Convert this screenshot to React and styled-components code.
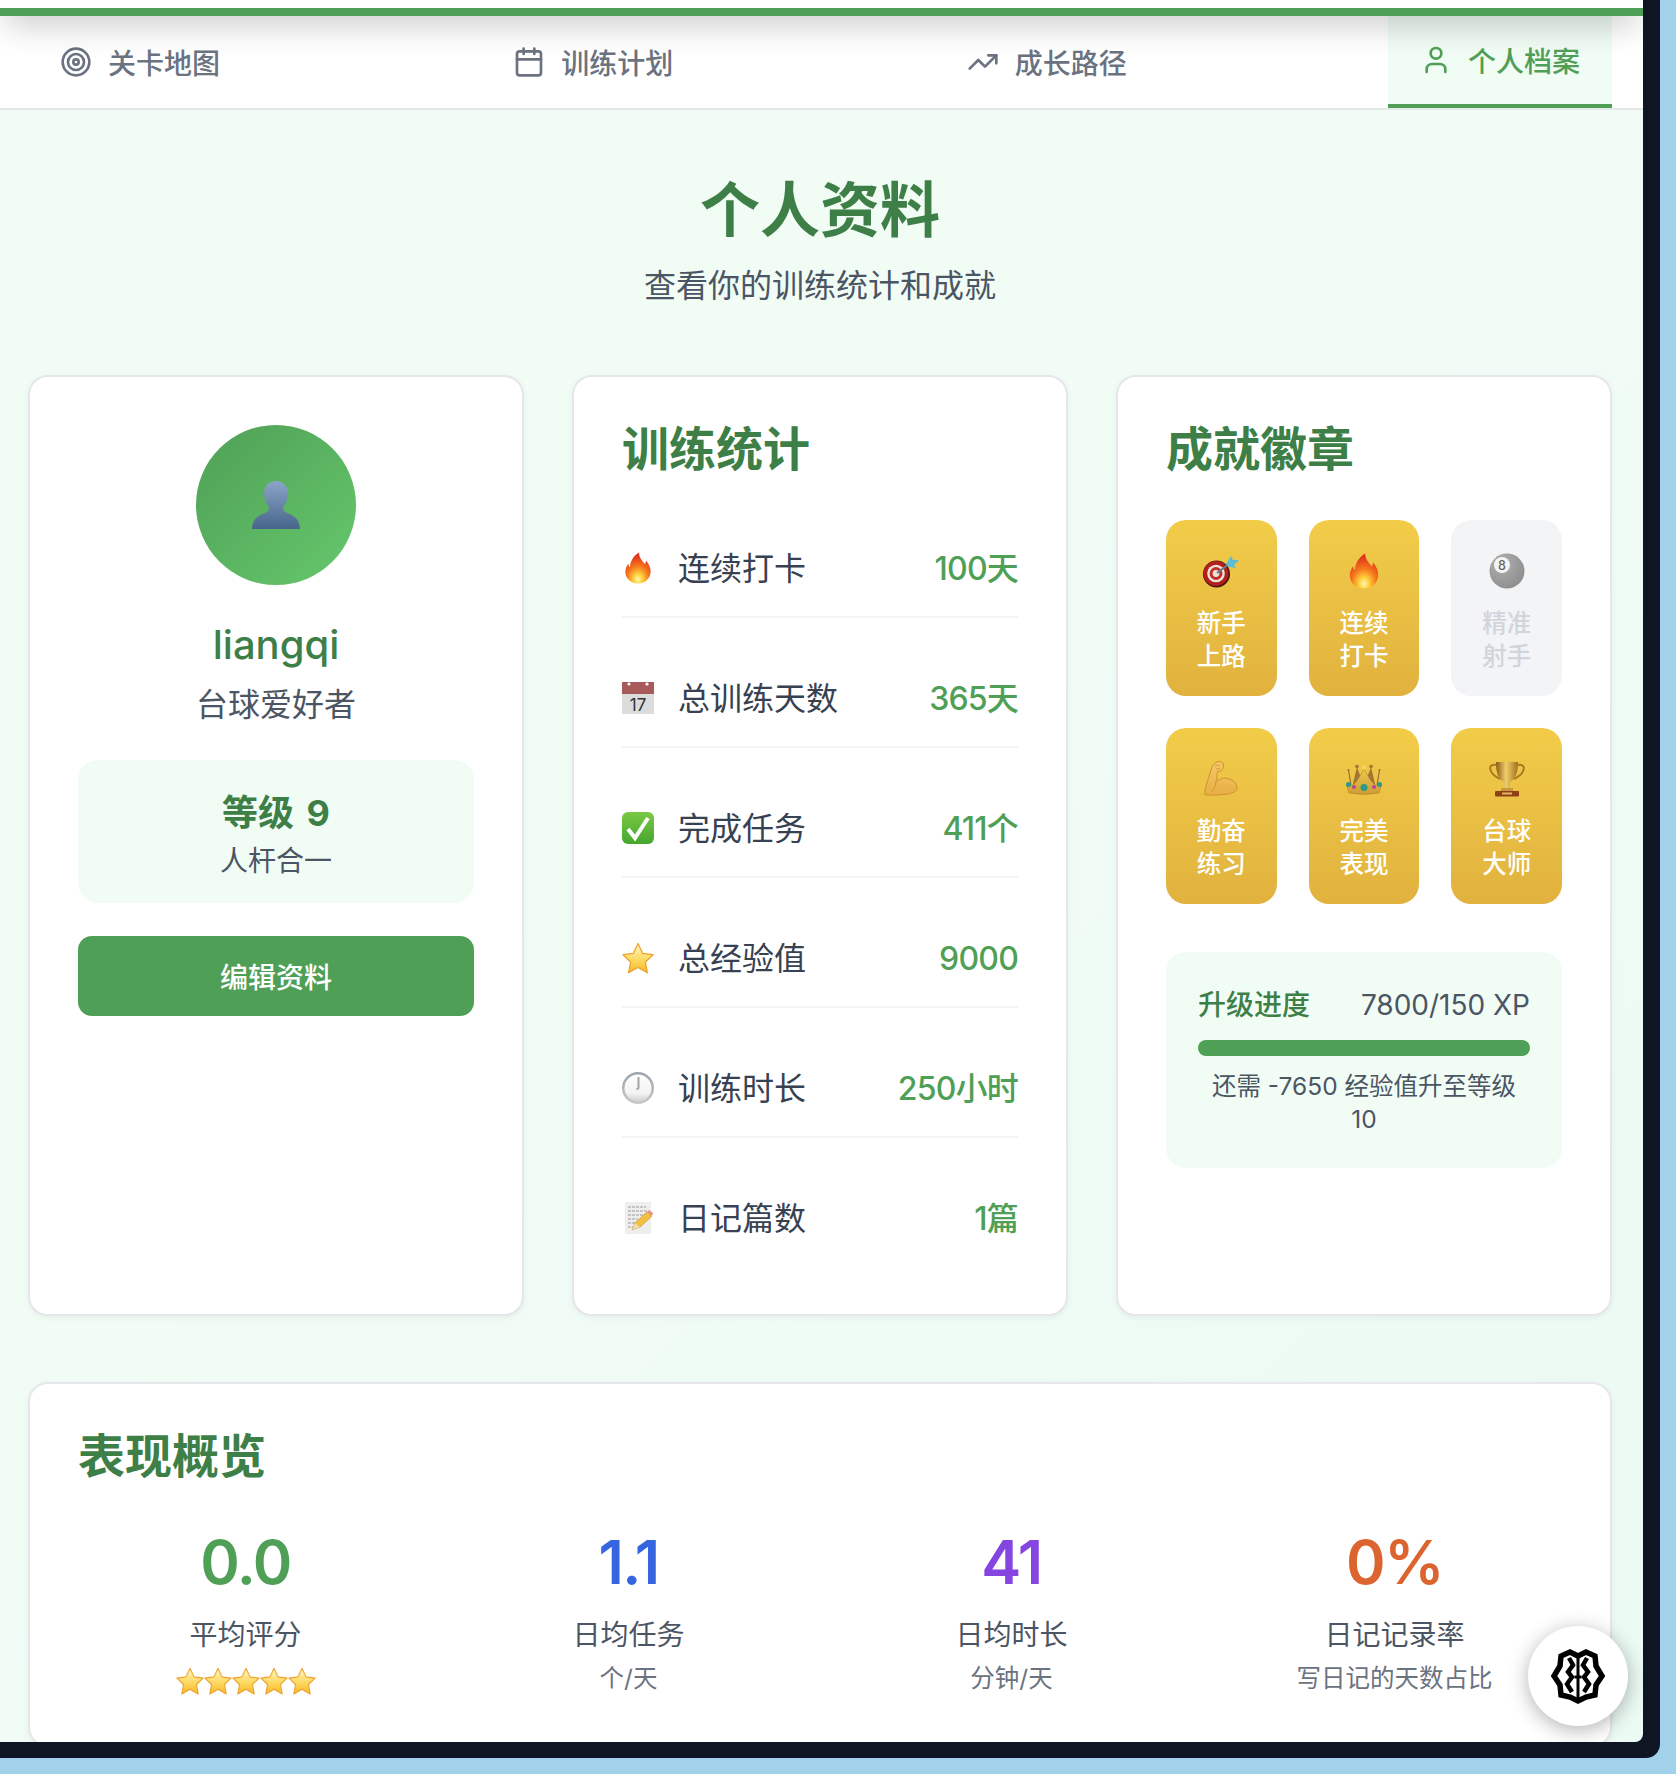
import styled, { createGlobalStyle } from 'styled-components';
import { Target, Calendar, TrendingUp, User } from 'lucide-react';

const GREEN = '#4f9f56';
const DARK_GREEN = '#3d7f47';
const MINT = '#f1fcf5';

const GlobalStyle = createGlobalStyle`
  html, body {
    margin: 0;
    height: 1774px;
    overflow: hidden;
    background: #a2d1ec;
    font-family: Inter, "Noto Sans CJK SC", sans-serif;
  }
  * { box-sizing: border-box; }
`;

// > Frame
const Screen = styled.div`
  width: 1660px;
  height: 1758px;
  padding: 0 17px 16px 0;
  background: #0f1523;
  border-radius: 0 0 14px 0;
`;
const Page = styled.div`
  position: relative;
  height: 100%;
  overflow: hidden;
  background: linear-gradient(135deg, ${MINT} 40%, #ecfaf4 100%);
  border-radius: 0 0 8px 0;
`;
const TopStrip = styled.div`
  height: 8px;
  background: #fff;
`;
const AccentBar = styled.div`
  position: relative;
  z-index: 2;
  height: 8px;
  background: ${GREEN};

  /* the bar is too thin to carry a shadow with negative spread itself */
  &::after {
    content: '';
    position: absolute;
    left: 0;
    right: 0;
    bottom: 0;
    height: 48px;
    box-shadow: 0 16px 32px -6px rgba(0, 0, 0, 0.2);
    pointer-events: none;
  }
`;

// > Nav
const Nav = styled.nav`
  display: flex;
  justify-content: space-between;
  height: 94px;
  padding: 0 31px 0 28px;
  background: #fff;
  border-bottom: 2px solid #e5e7eb;
`;
const Tab = styled.div`
  display: flex;
  align-items: center;
  gap: 16px;
  width: 224px;
  padding: 0 32px;
  font-size: 28px;
  font-weight: 500;
  color: ${props => (props.$active ? GREEN : '#6b7280')};
  background: ${props => (props.$active ? MINT : 'transparent')};
  border-bottom: ${props => (props.$active ? `4px solid ${GREEN}` : 'none')};
  white-space: nowrap;
`;

// > Content
const Main = styled.main`
  padding: 56px 31px 0 28px;
`;
const PageHead = styled.header`
  margin-bottom: 66px;
  text-align: center;
`;
const PageTitle = styled.h1`
  margin: 0;
  font-size: 60px;
  line-height: 88px;
  font-weight: 700;
  color: ${DARK_GREEN};
`;
const PageSub = styled.p`
  margin: 8px 0 0;
  font-size: 32px;
  line-height: 47px;
  color: #4b5563;
`;
const CardGrid = styled.div`
  display: grid;
  grid-template-columns: repeat(3, 1fr);
  gap: 48px;
  margin-bottom: 66px;
`;
const Card = styled.section`
  padding: 48px;
  background: #fff;
  border: 2px solid #e5e7eb;
  border-radius: 20px;
  box-shadow: 0 2px 6px rgba(0, 0, 0, 0.05);
`;
const CardTitle = styled.h2`
  margin: 0 0 47px;
  font-size: 47px;
  line-height: 48px;
  font-weight: 700;
  color: ${DARK_GREEN};
`;

// > Profile
const Profile = styled(Card)`
  display: flex;
  flex-direction: column;
  align-items: center;
`;
const Avatar = styled.div`
  display: flex;
  align-items: center;
  justify-content: center;
  width: 160px;
  height: 160px;
  border-radius: 50%;
  background: linear-gradient(135deg, ${GREEN}, #66c86c);
`;
const UserName = styled.div`
  margin-top: 28px;
  font-size: 40px;
  line-height: 63px;
  font-weight: 500;
  color: ${DARK_GREEN};
`;
const UserRole = styled.div`
  margin-top: 5px;
  font-size: 32px;
  line-height: 47px;
  color: #4b5563;
`;
const LevelBox = styled.div`
  width: 100%;
  margin-top: 32px;
  padding: 29px 0 22px;
  text-align: center;
  background: ${MINT};
  border-radius: 20px;
`;
const LevelName = styled.div`
  font-size: 36px;
  line-height: 48px;
  font-weight: 700;
  word-spacing: 4px;
  color: ${DARK_GREEN};
`;
const LevelTitle = styled.div`
  margin-top: 4px;
  font-size: 28px;
  line-height: 40px;
  color: #4b5563;
`;
const EditButton = styled.button`
  width: 100%;
  height: 80px;
  margin-top: 33px;
  border: none;
  border-radius: 14px;
  background: ${GREEN};
  color: #fff;
  font: 500 28px Inter, "Noto Sans CJK SC", sans-serif;
`;

// > Stats
const StatRow = styled.div`
  display: flex;
  align-items: center;
  padding: 24.5px 0;
  margin-bottom: 32px;
  border-bottom: 2px solid #f3f4f6;
  font-size: 32px;
  line-height: 47px;

  &:last-child {
    margin-bottom: 0;
    border-bottom: none;
  }
`;
const StatLabel = styled.span`
  flex: 1;
  margin-left: 24px;
  color: #374151;
`;
const StatValue = styled.span`
  font-weight: 500;
  letter-spacing: -0.8px;
  color: ${GREEN};
`;

// > Badges
const BadgeGrid = styled.div`
  display: grid;
  grid-template-columns: repeat(3, 1fr);
  gap: 32px;
`;
const Badge = styled.div`
  display: flex;
  flex-direction: column;
  align-items: center;
  height: 176px;
  padding: 33px 21px 0;
  border-radius: 20px;
  text-align: center;
  font-size: 24.5px;
  line-height: 32.5px;
  font-weight: 500;
  color: ${props => (props.$locked ? '#d1d5db' : '#fff')};
  background: ${props => (props.$locked ? '#f3f4f6' : 'linear-gradient(180deg, #f2cc49, #e1b23e)')};
`;
const BadgeName = styled.div`
  margin-top: 18px;
`;
const ProgressBox = styled.div`
  margin-top: 48px;
  padding: 32px;
  background: ${MINT};
  border-radius: 20px;
`;
const ProgressHead = styled.div`
  display: flex;
  justify-content: space-between;
  font-size: 28px;
  line-height: 42px;
  color: #4b5563;
`;
const ProgressLabel = styled.span`
  font-weight: 500;
  color: ${DARK_GREEN};
`;
const ProgressBar = styled.div`
  height: 16px;
  margin: 14px 0;
  border-radius: 8px;
  background: ${GREEN};
`;
const ProgressNote = styled.div`
  font-size: 24.5px;
  line-height: 33px;
  text-align: center;
  color: #4b5563;
`;

// > Overview
const OverviewGrid = styled.div`
  display: grid;
  grid-template-columns: repeat(4, 1fr);
  gap: 48px;
  text-align: center;
`;
const OverviewValue = styled.div`
  font-size: 60px;
  line-height: 71px;
  font-weight: 600;
  letter-spacing: -1.5px;
  color: ${props => props.$color};
`;
const OverviewLabel = styled.div`
  margin-top: 16px;
  font-size: 28px;
  line-height: 42px;
  color: #4b5563;
`;
const OverviewNote = styled.div`
  margin-top: 4px;
  font-size: 24.5px;
  line-height: 37px;
  color: #6b7280;
`;
const Stars = styled.div`
  display: flex;
  justify-content: center;
  margin-top: 11px;
`;
const HelperButton = styled.div`
  position: absolute;
  left: 1528px;
  top: 1626px;
  display: flex;
  align-items: center;
  justify-content: center;
  width: 100px;
  height: 100px;
  border-radius: 50%;
  background: #fff;
  box-shadow: 0 4px 20px rgba(0, 0, 0, 0.3);
`;

// > Emoji drawings
const Fire = ({ size = 32 }) => (
  <svg width={size} height={size} viewBox="0 0 32 32">
    <defs>
      <radialGradient id="flameFill" cx="0.5" cy="0.86" r="0.78">
        <stop offset="0" stopColor="#fff7b5" />
        <stop offset=".22" stopColor="#ffd23c" />
        <stop offset=".55" stopColor="#f5781c" />
        <stop offset="1" stopColor="#df2f1d" />
      </radialGradient>
    </defs>
    <path d="M17 .5c0 5 3 8 6 11.500.6-1 .9-2.200 1-3.500 3 3.500 5 7.500 4.600 12C28 27 22.500 31.500 16 31.500S4 27 3.400 21c-.4-4 1.100-7 3.100-9.500-.1 1.500.3 3 1.500 3.500C8 10 11 4 17 .5z" fill="url(#flameFill)" />
  </svg>
);
const CalendarDay = ({ size = 32 }) => (
  <svg width={size} height={size} viewBox="0 0 32 32">
    <rect width="32" height="32" fill="#dcdcdc" />
    <rect width="32" height="12" fill="#a8595a" />
    <circle cx="7" cy="2" r="1.600" fill="#fff" />
    <circle cx="25" cy="2" r="1.600" fill="#fff" />
    <text x="16" y="29" fontSize="17" textAnchor="middle" fill="#333" fontFamily="Inter, sans-serif">17</text>
  </svg>
);
const CheckBox = ({ size = 32 }) => (
  <svg width={size} height={size} viewBox="0 0 32 32">
    <defs>
      <linearGradient id="checkFill" x1="0" y1="0" x2="0" y2="1">
        <stop offset="0" stopColor="#7ac943" />
        <stop offset="1" stopColor="#46a62f" />
      </linearGradient>
    </defs>
    <rect width="32" height="32" rx="6" fill="url(#checkFill)" />
    <path d="M6 17l7 9L26 6" fill="none" stroke="#fff" strokeWidth="4" />
  </svg>
);
const StarIcon = ({ size = 32 }) => (
  <svg width={size} height={size} viewBox="0 0 32 32">
    <defs>
      <linearGradient id="starFill" x1="0" y1="0" x2="0" y2="1">
        <stop offset="0" stopColor="#fff6c4" />
        <stop offset=".6" stopColor="#fdd65a" />
        <stop offset="1" stopColor="#f8b62c" />
      </linearGradient>
    </defs>
    <path d="M16 1.500l4.600 9.800 10.400 1.400-7.600 7.300 2 10.800L16 25.400 6.600 30.800l2-10.800L1 12.700l10.400-1.400z" fill="url(#starFill)" stroke="#eba028" strokeWidth="1.200" strokeLinejoin="round" />
  </svg>
);
const Clock = ({ size = 32 }) => (
  <svg width={size} height={size} viewBox="0 0 32 32">
    <defs>
      <linearGradient id="clockFill" x1="0" y1="0" x2="0" y2="1">
        <stop offset="0" stopColor="#9aa2ad" />
        <stop offset="1" stopColor="#c8c8c8" />
      </linearGradient>
      <linearGradient id="clockFace" x1="0" y1="0" x2="0" y2="1">
        <stop offset="0" stopColor="#fff" />
        <stop offset=".7" stopColor="#f2f2f2" />
        <stop offset="1" stopColor="#d0d0d0" />
      </linearGradient>
    </defs>
    <circle cx="16" cy="16" r="16" fill="url(#clockFill)" />
    <circle cx="16" cy="16" r="13.500" fill="url(#clockFace)" />
    <path d="M16.500 5v11l-2 1.500" fill="none" stroke="#a5a5a5" strokeWidth="2" />
  </svg>
);
const Memo = ({ size = 32 }) => (
  <svg width={size} height={size} viewBox="0 0 32 32">
    <rect x="3" width="26" height="32" fill="#eeeeee" />
    <path d="M6 5h18M6 9h20M6 13h18M6 17h10M6 21h8M6 25h6" stroke="#9a9a9a" strokeWidth="1" strokeDasharray="3 1" />
    <path d="M10 28l3-7L25 10l5 4-12 11z" fill="#f3c13f" stroke="#b98a24" strokeWidth=".6" />
    <path d="M25 10l2-2 4 3-1 3z" fill="#ea8d8d" />
    <path d="M10 28l3-7 5 4z" fill="#f5dcae" />
  </svg>
);
const Dart = ({ size = 36 }) => (
  <svg width={size} height={size} viewBox="0 0 36 36">
    <circle cx="13.500" cy="21" r="13.500" fill="#4a1410" />
    <circle cx="13" cy="20.500" r="12.500" fill="#b3211c" />
    <circle cx="13" cy="20.500" r="8.800" fill="#efe3dc" />
    <circle cx="13" cy="20.500" r="6.400" fill="#c0302a" />
    <circle cx="13" cy="20.500" r="3.400" fill="#efe3dc" />
    <path d="M14 20L26 11" stroke="#5f7c88" strokeWidth="2" />
    <path d="M23 11l5-8 2 4 6 0-5 5 2 3-7-1z" fill="#5dbdd6" />
  </svg>
);
const EightBall = ({ size = 36 }) => (
  <svg width={size} height={size} viewBox="0 0 36 36">
    <defs>
      <radialGradient id="ballFill" cx="0.35" cy="0.3" r="0.8">
        <stop offset="0" stopColor="#b0b0b0" />
        <stop offset="1" stopColor="#8b8b8b" />
      </radialGradient>
    </defs>
    <circle cx="18" cy="18" r="17.500" fill="url(#ballFill)" />
    <circle cx="13" cy="12" r="8" fill="#f4f4f4" />
    <text x="13" y="16.500" fontSize="12.500" textAnchor="middle" fill="#666" fontFamily="Inter, sans-serif">8</text>
  </svg>
);
const Muscle = ({ size = 36 }) => (
  <svg width={size} height={size} viewBox="0 0 36 36">
    <defs>
      <linearGradient id="armFill" x1="0" y1="0" x2="0" y2="1">
        <stop offset="0" stopColor="#f5c965" />
        <stop offset="1" stopColor="#e8ae43" />
      </linearGradient>
    </defs>
    <path d="M8 9c1-4 3-7 6-8 3-1 6 0 6.500 3 .4 3-1.500 6-4 6l-2 .5c-.5 2.500-1 5.500-.5 10 3-3 7-4 11-3 5 1 9 5 9 9.500 0 3-4 5-9 6-7 1-17 1.500-23 .8C1 28 5 20 8 9z" fill="url(#armFill)" stroke="#c98c30" strokeWidth=".9" />
    <path d="M12 5c2-1 4-1 5 0M13 8c1.500 0 3 0 4-1M13 20c0 4-2 8-4 11" fill="none" stroke="#c98c30" strokeWidth=".8" />
  </svg>
);
const Crown = ({ size = 36 }) => (
  <svg width={size} height={size} viewBox="0 0 36 36">
    <defs>
      <linearGradient id="crownFill" x1="0" y1="0" x2="0" y2="1">
        <stop offset="0" stopColor="#edc950" />
        <stop offset="1" stopColor="#cd9c34" />
      </linearGradient>
    </defs>
    <path d="M6 27Q9 14 11 6q2 6 6 15h2q4-9 6-15 2 8 5 21z" fill="#a07632" />
    <circle cx="11" cy="5.500" r="1.800" fill="#a07632" />
    <circle cx="25" cy="5.500" r="1.800" fill="#a07632" />
    <path d="M2.500 9L5 24M33.500 9L31 24" stroke="#a07632" strokeWidth="1.300" />
    <circle cx="2.500" cy="9" r="1.100" fill="#a07632" />
    <circle cx="33.500" cy="9" r="1.100" fill="#a07632" />
    <path d="M1 25c5 2 11-4 17-18 6 14 12 20 17 18l-2 7q-15 3-30 0z" fill="url(#crownFill)" stroke="#b98b30" strokeWidth=".7" />
    <circle cx="18" cy="6.500" r="2" fill="#f5da5c" />
    <circle cx="18" cy="26.500" r="3.500" fill="#2b9a86" />
    <circle cx="2.500" cy="23.500" r="2.500" fill="#2b9a86" />
    <circle cx="33.500" cy="23.500" r="2.500" fill="#2b9a86" />
    <circle cx="8" cy="26" r="2" fill="#b5459a" />
    <circle cx="28" cy="26" r="2" fill="#b5459a" />
  </svg>
);
const Trophy = ({ size = 36 }) => (
  <svg width={size} height={size} viewBox="0 0 36 36">
    <defs>
      <linearGradient id="cupFill" x1="0" y1="0" x2="1" y2="0">
        <stop offset="0" stopColor="#8a5a16" />
        <stop offset=".45" stopColor="#f0cf6a" />
        <stop offset="1" stopColor="#a26f1c" />
      </linearGradient>
    </defs>
    <path d="M7 4C2 3 0 6 2 10c1 3 5 6 9 8M29 4c5-1 7 2 5 6-1 3-5 6-9 8" fill="none" stroke="#a9781f" strokeWidth="2" />
    <path d="M7 1h22c0 10-2 17-8 20v7h-6v-7C9 18 7 11 7 1z" fill="url(#cupFill)" />
    <rect x="12" y="27" width="12" height="3" fill="#c69a3c" />
    <rect x="6" y="30" width="24" height="5.500" rx="1" fill="#8f3f16" />
    <rect x="13" y="31.500" width="10" height="2" fill="#e0b860" />
  </svg>
);
const Bust = ({ size = 48 }) => (
  <svg width={size} height={size} viewBox="0 0 48 48">
    <defs>
      <linearGradient id="bustFill" x1="0" y1="0" x2="0" y2="1">
        <stop offset="0" stopColor="#8ba5c6" />
        <stop offset="1" stopColor="#47658c" />
      </linearGradient>
    </defs>
    <path d="M24 0c7 0 12 5 12 13 0 5-2 9-4 12-1.500 2.500-1 5 2 6.500 5 2.500 13 4 14 15.500 0 .5 0 1-.5 1H.5c-.5 0-.5-.5-.5-1 1-11.500 9-13 14-15.500 3-1.500 3.500-4 2-6.500-2-3-4-7-4-12C12 5 17 0 24 0z" fill="url(#bustFill)" />
  </svg>
);
const BrainMark = () => (
  <svg width="64" height="64" viewBox="0 0 64 64" fill="none" stroke="#000" strokeWidth="5.500" strokeLinejoin="miter">
    <path d="M32 12l-8-4-9 4-1 10-6 10 6 9 1 10 9 2 8 4 8-4 9-2 1-10 6-9-6-10-1-10-9-4z" />
    <path d="M23 14l4 7-5 7 4 5-5 7 5 8M41 14l-4 7 5 7-4 5 5 7-5 8" strokeWidth="4.500" />
    <path d="M32 12v42M28.500 33h7" strokeWidth="3" />
  </svg>
);

const stats = [
  { icon: <Fire />, label: '连续打卡', value: '100天' },
  { icon: <CalendarDay />, label: '总训练天数', value: '365天' },
  { icon: <CheckBox />, label: '完成任务', value: '411个' },
  { icon: <StarIcon />, label: '总经验值', value: '9000' },
  { icon: <Clock />, label: '训练时长', value: '250小时' },
  { icon: <Memo />, label: '日记篇数', value: '1篇' },
];
const badges = [
  { icon: <Dart />, name: '新手上路' },
  { icon: <Fire size={36} />, name: '连续打卡' },
  { icon: <EightBall />, name: '精准射手', locked: true },
  { icon: <Muscle />, name: '勤奋练习' },
  { icon: <Crown />, name: '完美表现' },
  { icon: <Trophy />, name: '台球大师' },
];
const tabs = [
  { icon: Target, label: '关卡地图' },
  { icon: Calendar, label: '训练计划' },
  { icon: TrendingUp, label: '成长路径' },
  { icon: User, label: '个人档案', active: true },
];

function App() {
  return (
    <>
      <GlobalStyle />
      <Screen>
        <Page>
          <TopStrip />
          <AccentBar />
          <Nav>
            {tabs.map(tab => (
              <Tab key={tab.label} $active={tab.active}>
                <tab.icon size={32} />
                {tab.label}
              </Tab>
            ))}
          </Nav>
          <Main>
            <PageHead>
              <PageTitle>个人资料</PageTitle>
              <PageSub>查看你的训练统计和成就</PageSub>
            </PageHead>
            <CardGrid>
              <Profile>
                <Avatar><Bust /></Avatar>
                <UserName>liangqi</UserName>
                <UserRole>台球爱好者</UserRole>
                <LevelBox>
                  <LevelName>等级 9</LevelName>
                  <LevelTitle>人杆合一</LevelTitle>
                </LevelBox>
                <EditButton>编辑资料</EditButton>
              </Profile>
              <Card>
                <CardTitle>训练统计</CardTitle>
                {stats.map(stat => (
                  <StatRow key={stat.label}>
                    {stat.icon}
                    <StatLabel>{stat.label}</StatLabel>
                    <StatValue>{stat.value}</StatValue>
                  </StatRow>
                ))}
              </Card>
              <Card>
                <CardTitle>成就徽章</CardTitle>
                <BadgeGrid>
                  {badges.map(badge => (
                    <Badge key={badge.name} $locked={badge.locked}>
                      {badge.icon}
                      <BadgeName>{badge.name}</BadgeName>
                    </Badge>
                  ))}
                </BadgeGrid>
                <ProgressBox>
                  <ProgressHead>
                    <ProgressLabel>升级进度</ProgressLabel>
                    <span>7800/150 XP</span>
                  </ProgressHead>
                  <ProgressBar />
                  <ProgressNote>还需 -7650 经验值升至等级 10</ProgressNote>
                </ProgressBox>
              </Card>
            </CardGrid>
            <Card>
              <CardTitle>表现概览</CardTitle>
              <OverviewGrid>
                <div>
                  <OverviewValue $color={GREEN}>0.0</OverviewValue>
                  <OverviewLabel>平均评分</OverviewLabel>
                  <Stars>
                    {[1, 2, 3, 4, 5].map(n => <StarIcon key={n} size={28} />)}
                  </Stars>
                </div>
                <div>
                  <OverviewValue $color="#3566e0">1.1</OverviewValue>
                  <OverviewLabel>日均任务</OverviewLabel>
                  <OverviewNote>个/天</OverviewNote>
                </div>
                <div>
                  <OverviewValue $color="#8445e0">41</OverviewValue>
                  <OverviewLabel>日均时长</OverviewLabel>
                  <OverviewNote>分钟/天</OverviewNote>
                </div>
                <div>
                  <OverviewValue $color="#db642f">0%</OverviewValue>
                  <OverviewLabel>日记记录率</OverviewLabel>
                  <OverviewNote>写日记的天数占比</OverviewNote>
                </div>
              </OverviewGrid>
            </Card>
          </Main>
          <HelperButton><BrainMark /></HelperButton>
        </Page>
      </Screen>
    </>
  );
}

export default App;
